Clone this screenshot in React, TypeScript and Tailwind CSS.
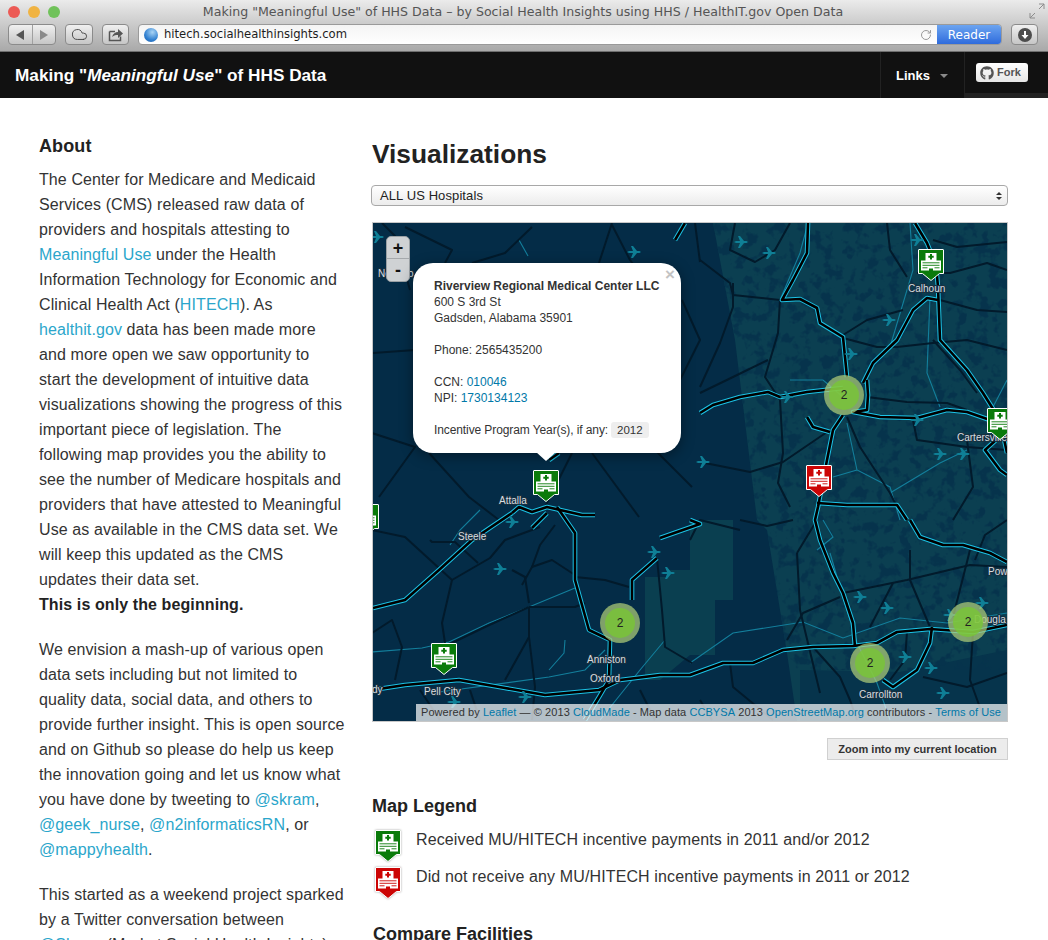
import { Cloud, RotateCw } from "lucide-react";
import { FaGithub } from "react-icons/fa";

// all map geometry below is in page coordinates, the svg viewBox is offset to match
const highways = [
  "915,223 927,243 936,265 938,287 940,340 967,370 983,393 1000,420 1007,453",
  "808,223 807,253 793,280 782,300 800,299 817,308 820,323 843,337 847,377",
  "700,413 713,405 740,397 768,392 780,397 807,392 843,388",
  "867,380 868,395 867,410 853,412 880,417 917,418 947,410 967,412 990,420",
  "863,383 873,363 897,340 913,310 927,298 938,300",
  "843,415 833,430 827,460 818,507 815,520 820,540 833,573 843,593 853,623 855,647",
  "807,417 813,427 830,432",
  "817,503 847,505 897,505 907,520",
  "372,690 405,685 459,680 505,688 545,695 599,690 620,680 660,675 690,675 723,663 753,663 783,650 813,647 853,646 877,643 897,632 930,629 973,632 1007,625",
  "373,608 405,600 439,570 472,540 512,513",
  "512,513 519,507 532,512 547,507 582,515 595,515",
  "547,513 532,528",
  "549,460 559,453",
  "675,240 685,223",
  "557,507 575,533 575,580 589,630 610,640 609,680 599,697 585,720",
  "657,558 632,580 632,600",
  "910,520 920,537 943,545 963,545 990,553 1007,562",
  "932,627 930,643 917,670 893,687 883,680",
  "660,538 700,524 690,520",
  "1007,430 985,450 1000,470 1007,475",
];

const roads = [
  "700,260 730,283 733,295 780,300",
  "780,300 778,333 765,377 780,400 783,453 778,483 790,507",
  "733,283 733,307 720,343 700,387",
  "768,360 733,377 700,393",
  "843,338 877,347 897,347 933,343 967,340 1007,350",
  "843,335 867,320 903,310",
  "940,300 977,310 1007,312",
  "917,273 950,273 987,263 1007,270",
  "933,240 957,247 1007,242",
  "887,223 890,250 907,277",
  "867,397 907,402 947,403 967,410",
  "913,420 917,440 967,447 1007,450",
  "933,340 960,370 977,393",
  "847,417 860,447 890,493 897,507",
  "700,462 750,472 783,462 830,430",
  "967,440 973,487 953,520",
  "735,223 730,250 755,262 775,250 790,223",
  "695,223 700,262",
  "372,353 415,350",
  "372,433 415,447 379,497",
  "429,453 469,497 499,520",
  "572,453 545,507",
  "592,453 639,517",
  "655,450 692,487",
  "405,227 452,250 445,263",
  "472,263 505,253 532,227",
  "599,263 612,223",
  "682,300 700,340 680,380",
  "382,223 395,236 410,290",
  "372,530 405,537 452,580 442,623 445,643",
  "430,540 432,542 455,542 478,563",
  "452,580 490,558 505,540 540,527",
  "372,633 392,620 402,647 395,680",
  "529,607 485,627 452,643 442,647",
  "529,607 529,637 505,680",
  "529,607 575,607 585,603",
  "575,577 605,580 629,587",
  "529,637 535,687 532,720",
  "529,603 525,577 512,570",
  "522,585 532,567 540,545 555,525",
  "532,567 552,560 575,575",
  "662,610 665,647 692,663",
  "657,558 662,610",
  "612,225 630,260 660,300",
  "797,553 800,610 820,693",
  "817,520 797,553",
  "843,593 907,580 970,565 1007,567",
  "893,583 870,627",
  "910,550 910,580 930,627",
  "970,550 953,617",
  "840,597 803,613 787,640",
  "813,647 840,677 850,700 857,720",
  "730,663 733,687 773,720",
  "923,677 967,687 1007,673",
  "973,632 970,680 983,716",
  "690,540 700,520 740,530",
  "740,520 767,526 793,520",
  "700,700 712,720",
  "907,632 905,660 890,680",
  "1007,520 985,535 975,560",
  "640,690 655,720",
  "420,690 440,720",
  "470,690 480,720",
];

const rivers = [
  "372,652 422,648 449,642 489,623 529,607 575,588",
  "432,693 549,677 585,670 605,650",
  "549,670 564,653 565,640",
  "690,663 733,633 803,622 843,638 900,618 947,623 1007,613",
  "817,550 833,537 823,520",
  "830,553 840,587 857,643 877,683 890,720",
  "847,423 857,470 890,487 900,520",
  "833,477 857,470",
  "790,380 823,380 843,397",
  "780,300 800,253 808,223",
  "930,297 927,373 940,407",
  "890,347 913,270 910,223",
  "890,493 940,463 967,450",
  "1007,380 993,407",
  "519,240 528,256",
  "600,720 640,670 665,640",
  "480,510 460,530 450,545",
];

const planes = [
  [741, 242], [769, 253], [889, 320], [851, 354], [917, 240], [917, 420], [963, 454], [940, 454],
  [703, 462], [787, 397], [634, 252], [377, 237], [500, 569], [654, 552], [668, 573], [454, 702],
  [525, 697], [512, 522], [860, 597], [887, 608], [905, 657], [931, 668], [943, 693], [982, 603], [950, 615],
];

const mapLabels: [string, number, number][] = [
  ["New Ho", 378, 277],
  ["Calhoun", 908, 292],
  ["Cartersville", 957, 441],
  ["Attalla", 499, 504],
  ["Steele", 458, 540],
  ["Anniston", 587, 663],
  ["Oxford", 590, 682],
  ["Pell City", 424, 695],
  ["dy", 372, 693],
  ["Carrollton", 859, 698],
  ["Pow", 988, 575],
  ["Dougla", 974, 623],
];

const markers = [
  { x: 918, y: 249, color: "#0a7a0a" },
  { x: 987, y: 408, color: "#0a7a0a" },
  { x: 806, y: 465, color: "#cc0505" },
  { x: 533, y: 470, color: "#0a7a0a" },
  { x: 353, y: 504, color: "#0a7a0a" },
  { x: 431, y: 643, color: "#0a7a0a" },
];

const clusters = [
  [844, 395],
  [620, 623],
  [870, 663],
  [968, 622],
];

function HospitalPin({ color }: { color: string }) {
  return (
    <svg width="26" height="32" viewBox="0 0 26 32">
      <path d="M1 .5H25a.5.5 0 0 1 .5.5V24.5H21.5L13 31.5 4.5 24.5H.5V1A.5.5 0 0 1 1 .5Z" fill={color} stroke="#fff" />
      <path d="M7.5 4H18.5V11.5H23V21.5H15V19.5H11V21.5H3V11.5H7.5Z" fill="#fff" />
      <path d="M12 5h2v1.7h1.7v2H14v1.8h-2V8.7h-1.7v-2H12Z" fill={color} />
      <path d="M4.5 13.8h17M4.5 16.3h17M4.5 18.8h5M16.5 18.8h5" stroke={color} strokeWidth=".9" />
    </svg>
  );
}

function Map() {
  return (
    <div className="relative h-[500px] w-[636px] overflow-hidden border border-[#c8c8c8] bg-[#042c47]">
      <svg className="block h-[498px] w-[634px]" viewBox="373 223 634 498">
        <defs>
          <filter id="speckle" x="0" y="0" width="100%" height="100%" colorInterpolationFilters="sRGB">
            <feTurbulence type="fractalNoise" baseFrequency="0.09" numOctaves="3" seed="7" />
            <feColorMatrix values="0 0 0 0 0.024  0 0 0 0 0.2  0 0 0 0 0.3  0 0 0 7 -3.6" />
            <feComposite in2="SourceAlpha" operator="in" />
          </filter>
          <g id="plane">
            <path d="M-7 0 L-5 -.9 L-1 -.9 L-3 -6 L-1 -6 L3 -.9 L5.5 -.9 L7 0 L5.5 .9 L3 .9 L-1 6 L-3 6 L-1 .9 L-5 .9Z" fill="#0f7f96" />
          </g>
        </defs>
        <path d="M713 223H1007V721H797L787 653 767 530 757 520 735 340Z" fill="#0b3f51" />
        <path d="M645 577H668V570H690V520H733V600H715V655H690L660 680H645Z" fill="#0a3f50" />
        <path d="M800 670L900 672 1007 650V721H800Z" fill="#06344c" />
        <path d="M713 223H1007V670H797L787 653 767 530 757 520 735 340Z" filter="url(#speckle)" />

        {rivers.map((points, i) => (
          <polyline key={i} points={points} fill="none" stroke="#137f9c" strokeWidth="1.1" />
        ))}
        {roads.map((points, i) => (
          <polyline key={i} points={points} fill="none" stroke="#021a2b" strokeWidth="2" strokeLinejoin="round" />
        ))}
        {highways.map((points, i) => (
          <polyline key={i} points={points} fill="none" stroke="#1cc3e6" strokeWidth="4.6" strokeLinejoin="round" />
        ))}
        {highways.map((points, i) => (
          <polyline key={i} points={points} fill="none" stroke="#000" strokeWidth="2.6" strokeLinejoin="round" />
        ))}
        {planes.map(([x, y], i) => (
          <use key={i} href="#plane" x={x} y={y} />
        ))}
        {mapLabels.map(([label, x, y]) => (
          <text
            key={label}
            x={x}
            y={y}
            fill="#d8dde0"
            fontSize="10"
            stroke="#16303f"
            strokeWidth="2"
            paintOrder="stroke"
            fontFamily="Liberation Sans, sans-serif"
          >
            {label}
          </text>
        ))}
      </svg>

      {/* pins and clusters sit on the map at their own spots */}
      {clusters.map(([x, y]) => (
        <div
          key={`${x}-${y}`}
          className="absolute flex h-10 w-10 items-center justify-center rounded-full bg-[rgba(175,205,120,0.72)]"
          style={{ left: x - 393, top: y - 243 }}
        >
          <div className="flex h-[30px] w-[30px] items-center justify-center rounded-full bg-[rgba(120,200,50,0.75)] text-xs text-[#222]">
            2
          </div>
        </div>
      ))}
      {markers.map((m) => (
        <div key={`${m.x}-${m.y}`} className="absolute" style={{ left: m.x - 373, top: m.y - 223 }}>
          <HospitalPin color={m.color} />
        </div>
      ))}

      <div className="absolute left-[13px] top-[13px] flex w-6 flex-col overflow-hidden rounded-[5px] border border-[#9aa0a4] bg-[#cfd2d4] text-[#111]">
        <div className="flex h-[22px] items-center justify-center border-b border-[#a5a9ac] text-lg font-bold leading-none">+</div>
        <div className="flex h-[22px] items-center justify-center text-lg font-bold leading-none">-</div>
      </div>

      <div className="absolute left-10 top-10 h-[190px] w-[268px] rounded-[20px] bg-white px-[21px] pt-[15px] text-xs leading-4 text-[#333] shadow-[0_3px_14px_rgba(0,0,0,0.4)]">
        <div className="absolute right-[6px] top-[4px] text-[17px] font-bold leading-4 text-[#c3c3c3]">×</div>
        <p className="whitespace-nowrap font-bold">Riverview Regional Medical Center LLC</p>
        <p>600 S 3rd St</p>
        <p>Gadsden, Alabama 35901</p>
        <p className="mt-4">Phone: 2565435200</p>
        <p className="mt-4">
          CCN: <a className="text-[#0078a8]">010046</a>
        </p>
        <p>
          NPI: <a className="text-[#0078a8]">1730134123</a>
        </p>
        <p className="mt-4 flex items-center tracking-[-0.1px]">
          Incentive Program Year(s), if any:
          <span className="ml-[3px] rounded-[3px] bg-[#eeeeee] px-[6px] text-[11.5px] leading-4 tracking-normal">2012</span>
        </p>
      </div>
      <div className="absolute left-[163px] top-[229px] h-0 w-0 border-x-[10px] border-t-[9px] border-x-transparent border-t-white" />

      <div className="absolute bottom-0 right-0 flex h-[17px] w-[591px] items-center whitespace-nowrap bg-[rgba(255,255,255,0.7)] pl-[5px] text-[11px] tracking-[0.07px] text-[#333]">
        Powered by&nbsp;<a className="text-[#0078a8]">Leaflet</a>&nbsp;— © 2013&nbsp;<a className="text-[#0078a8]">CloudMade</a>&nbsp;- Map data&nbsp;
        <a className="text-[#0078a8]">CCBYSA</a>&nbsp;2013&nbsp;<a className="text-[#0078a8]">OpenStreetMap.org</a>&nbsp;contributors -&nbsp;
        <a className="text-[#0078a8]">Terms of Use</a>
      </div>
    </div>
  );
}

function Browser() {
  const btn = "flex h-[21px] items-center justify-center rounded-[4px] border border-[#8b8b8b] bg-gradient-to-b from-[#f0f0f0] to-[#c6c6c6]";
  return (
    <div className="h-[52px] border-b border-[#6f6f6f] bg-gradient-to-b from-[#ebebeb] via-[#c9c9c9] to-[#a9a9a9]">
      <div className="relative flex h-[24px] items-center">
        <div className="ml-2 flex gap-2">
          <span className="h-3 w-3 rounded-full bg-[#ec5a55]" />
          <span className="h-3 w-3 rounded-full bg-[#f0b342]" />
          <span className="h-3 w-3 rounded-full bg-[#70c25a]" />
        </div>
        <div className="flex-1 pr-[62px] text-center font-['DejaVu_Sans',sans-serif] text-[12.6px] text-[#555]">
          Making "Meaningful Use" of HHS Data – by Social Health Insights using HHS / HealthIT.gov Open Data
        </div>
        <svg className="absolute right-[3px] top-[3px]" width="16" height="16" viewBox="0 0 16 16" fill="none" stroke="#8c8c8c">
          <path d="M1 15 6 10M1 10v5h5M15 1l-5 5M10 1h5v5" />
        </svg>
      </div>
      <div className="flex items-center pl-2">
        <div className={`${btn} w-12`}>
          <span className="flex h-full flex-1 items-center justify-center border-r border-[#a0a0a0]">
            <span className="h-0 w-0 border-y-[5px] border-r-[8px] border-y-transparent border-r-[#555]" />
          </span>
          <span className="flex h-full flex-1 items-center justify-center">
            <span className="h-0 w-0 border-y-[5px] border-l-[8px] border-y-transparent border-l-[#8a8a8a]" />
          </span>
        </div>
        <div className={`${btn} ml-[9px] w-7`}>
          <Cloud size={17} strokeWidth={1.3} className="text-[#444]" />
        </div>
        <div className={`${btn} ml-[9px] w-[27px]`}>
          <svg width="16" height="14" viewBox="0 0 16 14" fill="none">
            <path d="M1.5 3.5H7M12.5 8.5v4H1.5v-9" stroke="#555" strokeWidth="1.5" />
            <path d="M4 9C5 5.5 7.5 4 10 4V1l5 4.5L10 10V7C8 7 6 7.3 4 9Z" fill="#555" />
          </svg>
        </div>
        <div className="ml-[9px] flex h-[21px] w-[864px] items-center overflow-hidden rounded-[4px] border border-[#9a9a9a] bg-gradient-to-b from-[#f4f4f4] to-white">
          <span className="ml-[5px] h-[14px] w-[14px] rounded-full bg-[radial-gradient(circle_at_60%_30%,#a9d4f5,#2f7fd0_60%,#1c5ca8)]" />
          <span className="ml-[6px] flex-1 font-['DejaVu_Sans',sans-serif] text-[11.6px] text-[#1d1d1d]">hitech.socialhealthinsights.com</span>
          <RotateCw size={12} className="mr-[5px] text-[#9a9a9a]" />
          <span className="flex h-full w-[64px] items-center justify-center bg-gradient-to-b from-[#6ca4f0] to-[#2f6bdc] font-['DejaVu_Sans',sans-serif] text-[12px] text-white">
            Reader
          </span>
        </div>
        <div className={`${btn} ml-[9px] w-[27px]`}>
          <span className="flex h-[14px] w-[14px] items-center justify-center rounded-full bg-[#4c4c4c]">
            <svg width="8" height="8" viewBox="0 0 8 8">
              <path d="M3 0H5V4H7.5L4 8 .5 4H3Z" fill="#fff" />
            </svg>
          </span>
        </div>
      </div>
    </div>
  );
}

function Navbar() {
  return (
    <div className="flex h-[46px] items-stretch bg-[#111111] text-white">
      <div className="flex flex-1 items-center pl-[15px] pt-px text-[17.2px] font-bold">
        Making "<em>Meaningful Use</em>" of HHS Data
      </div>
      <div className="flex w-[85px] items-center border-x border-[#222] pl-[15px] pt-px text-[13px] font-bold">
        Links
        <span className="ml-[10px] h-0 w-0 border-x-[4.5px] border-t-[4px] border-x-transparent border-t-[#8a8a8a]" />
      </div>
      <div className="flex w-[83px] flex-col">
        <div className="flex h-[41px] items-start bg-[#111111] pl-[11px] pt-[11px]">
          <div className="flex h-[19px] w-[52px] items-center gap-[3px] rounded-[3px] bg-gradient-to-b from-white to-[#e6e6e6] pl-[4px] text-[11px] font-bold text-[#555]">
            <FaGithub size={14} />
            Fork
          </div>
        </div>
        <div className="flex-1 bg-[#222222]" />
      </div>
    </div>
  );
}

export default function App() {
  const link = "text-[#2ba6cb]";
  return (
    <div className="h-[940px] w-[1048px] overflow-hidden bg-white font-['Liberation_Sans',Arial,sans-serif] text-[#333]">
      <Browser />
      <Navbar />
      <div className="flex">
        <aside className="ml-[39px] w-[306px] pt-[35px] text-base leading-[25px] tracking-[0.1px]">
          <h4 className="mb-2 text-lg font-bold leading-[26px] text-[#222]">About</h4>
          <p className="mb-[19.5px]">
            The Center for Medicare and Medicaid Services (CMS) released raw data of providers and hospitals attesting to{" "}
            <a className={link}>Meaningful Use</a> under the Health Information Technology for Economic and Clinical Health Act (
            <a className={link}>HITECH</a>). As <a className={link}>healthit.gov</a> data has been made more and more open we saw
            opportunity to start the development of intuitive data visualizations showing the progress of this important piece of
            legislation. The following map provides you the ability to see the number of Medicare hospitals and providers that have
            attested to Meaningful Use as available in the CMS data set. We will keep this updated as the CMS updates their data set.
            <br />
            <strong className="text-[#222]">This is only the beginning.</strong>
          </p>
          <p className="mb-[20px]">
            We envision a mash-up of various open data sets including but not limited to quality data, social data, and others to
            provide further insight. This is open source and on Github so please do help us keep the innovation going and let us know
            what you have done by tweeting to <a className={link}>@skram</a>, <a className={link}>@geek_nurse</a>,{" "}
            <a className={link}>@n2informaticsRN</a>, or <a className={link}>@mappyhealth</a>.
          </p>
          <p>
            This started as a weekend project sparked by a Twitter conversation between <a className={link}>@Skram</a> (Market Social
            Health Insights)
          </p>
        </aside>

        <main className="ml-[27px] w-[636px]">
          <h2 className="mt-[38px] text-[26.3px] font-bold leading-9 text-[#222]">Visualizations</h2>
          <div className="mt-[13px] flex h-[21px] w-[637px] -translate-x-px items-center justify-between rounded-[4px] border border-[#a8a8a8] bg-gradient-to-b from-white to-[#ececec] pl-2 pr-[5px] text-[13px] tracking-[0.1px] text-[#222]">
            ALL US Hospitals
            <span className="flex flex-col gap-[2px]">
              <span className="h-0 w-0 border-x-[3px] border-b-[3.5px] border-x-transparent border-b-[#333]" />
              <span className="h-0 w-0 border-x-[3px] border-t-[3.5px] border-x-transparent border-t-[#333]" />
            </span>
          </div>
          <div className="mt-4">
            <Map />
          </div>
          <div className="mt-4 flex justify-end">
            <button className="h-[22px] w-[181px] border border-[#d0d0d0] bg-[#ececec] text-[11px] font-bold text-[#333]">
              Zoom into my current location
            </button>
          </div>
          <h4 className="mt-[33px] text-lg font-bold leading-[26px] text-[#222]">Map Legend</h4>
          <div className="mt-[11px] flex h-[37px] items-start pl-[3px]">
            <span className="drop-shadow-[0_0_1px_rgba(0,0,0,0.35)]">
              <HospitalPin color="#0a7a0a" />
            </span>
            <span className="ml-[15px] text-base leading-[20px] tracking-[0.12px]">Received MU/HITECH incentive payments in 2011 and/or 2012</span>
          </div>
          <div className="flex h-[37px] items-start pl-[3px]">
            <span className="drop-shadow-[0_0_1px_rgba(0,0,0,0.35)]">
              <HospitalPin color="#cc0505" />
            </span>
            <span className="ml-[15px] text-base leading-[20px] tracking-[0.12px]">Did not receive any MU/HITECH incentive payments in 2011 or 2012</span>
          </div>
          <h4 className="mt-[17px] pl-px text-lg font-bold leading-[26px] text-[#222]">Compare Facilities</h4>
        </main>
      </div>
    </div>
  );
}
